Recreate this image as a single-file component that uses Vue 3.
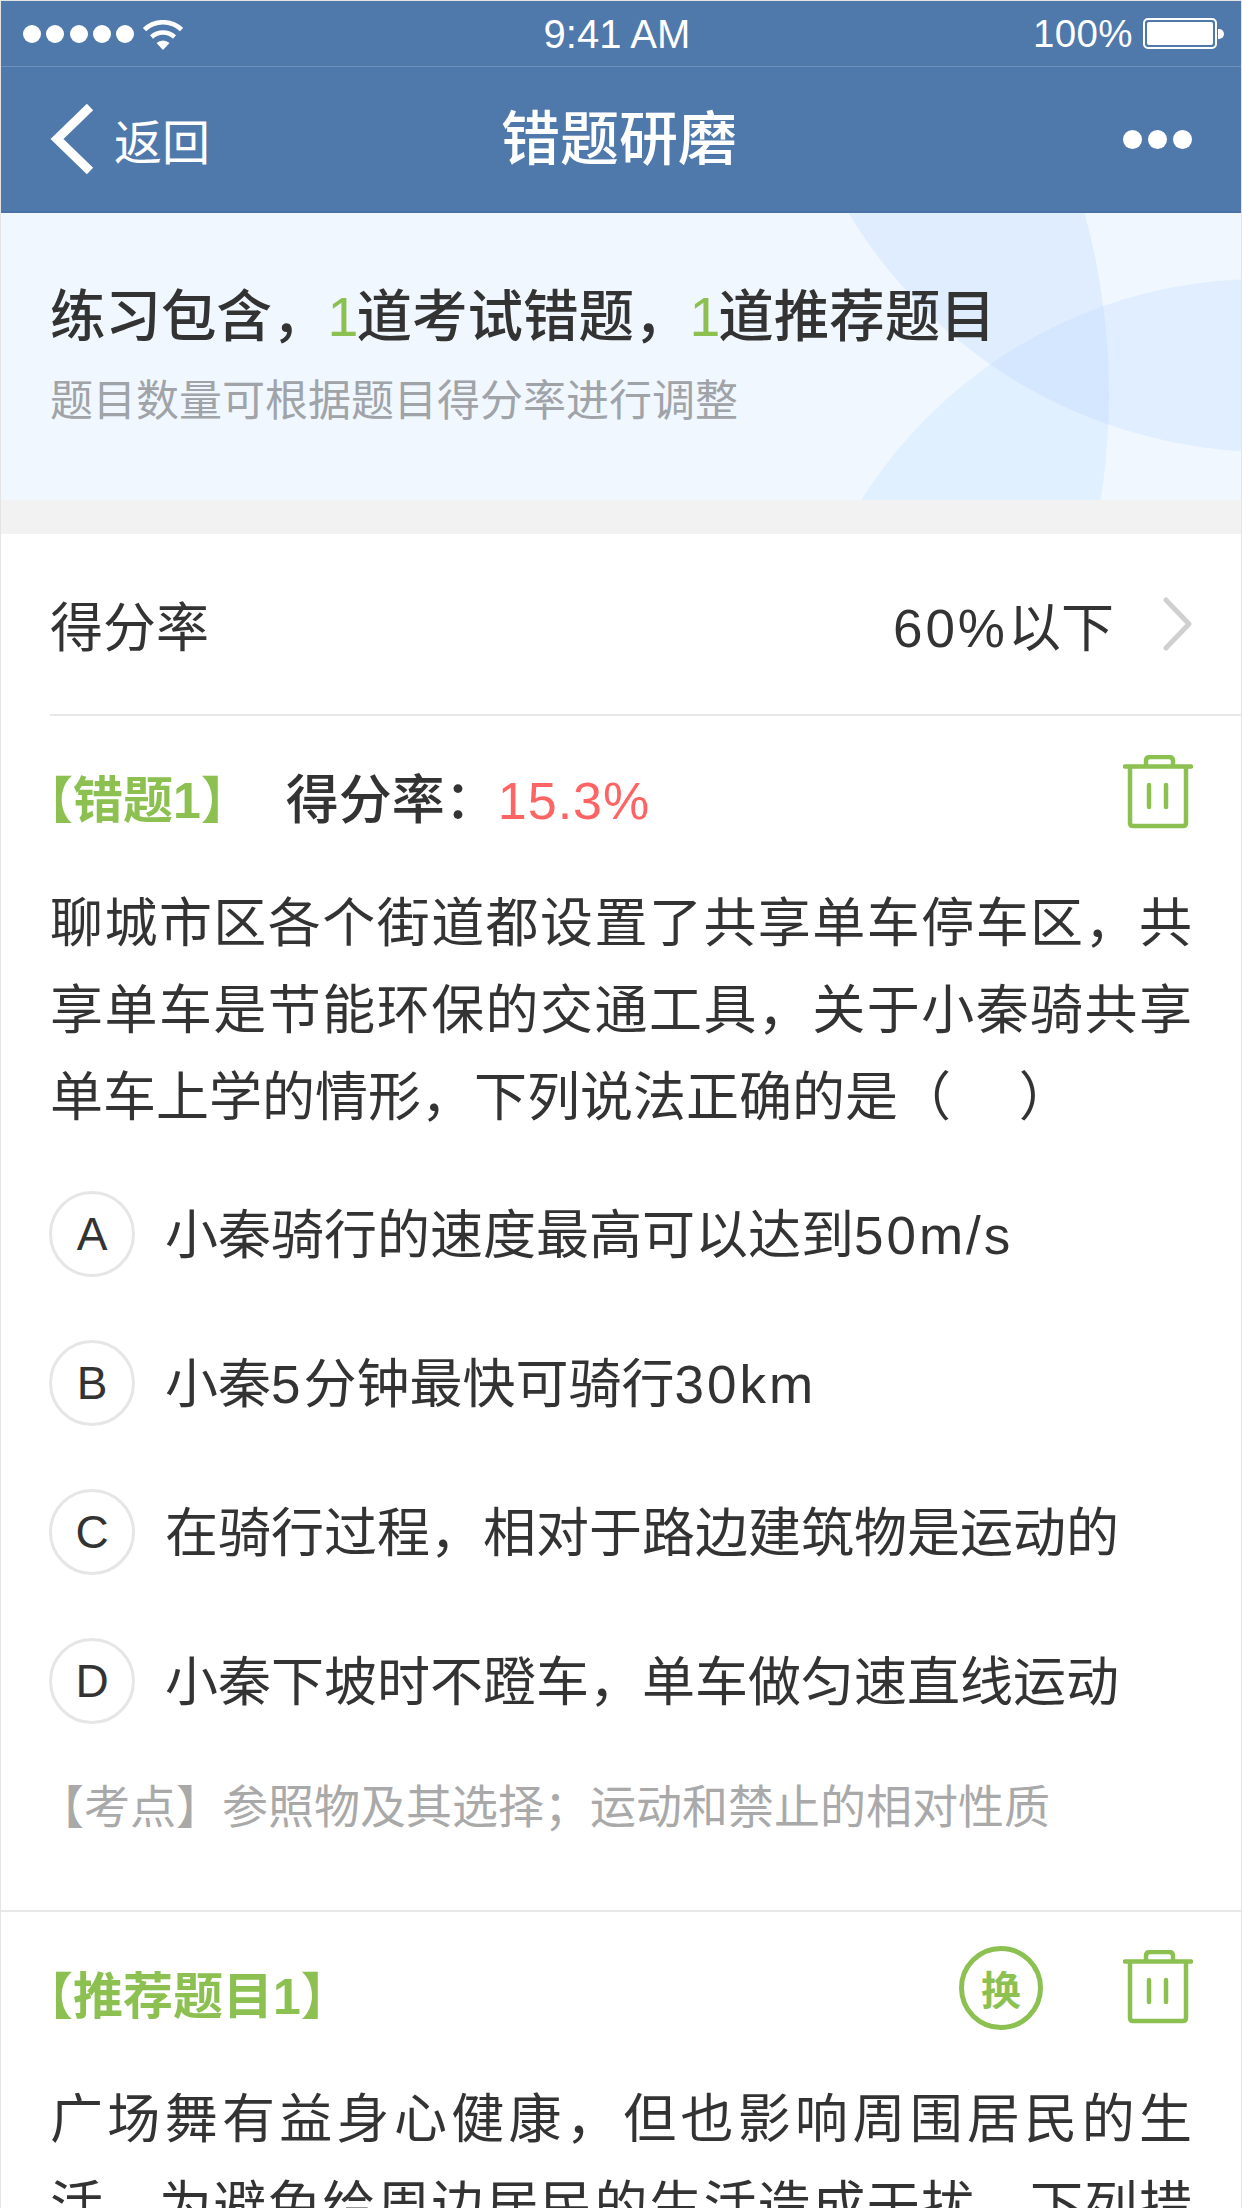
<script setup>
const split = (s) => s.split(/([0-9a-zA-Z/%]+)/).filter(Boolean).map((t) => ({ t, latin: /^[0-9a-zA-Z/%]+$/.test(t) }))
const options = [
  { key: 'A', parts: split('小秦骑行的速度最高可以达到50m/s') },
  { key: 'B', parts: split('小秦5分钟最快可骑行30km') },
  { key: 'C', parts: split('在骑行过程\uFF0C相对于路边建筑物是运动的') },
  { key: 'D', parts: split('小秦下坡时不蹬车\uFF0C单车做匀速直线运动') }
]
const dots = [1, 2, 3, 4, 5]
</script>

<template>
  <div class="page">
    <header class="top">
      <div class="status">
        <div class="signal">
          <i v-for="d in dots" :key="d" class="dot"></i>
          <svg class="wifi" width="40" height="32" viewBox="0 0 40 32">
            <path d="M1.500 9.500 A27 27 0 0 1 38.500 9.500" fill="none" stroke="#fff" stroke-width="4.500" />
            <path d="M8.500 17 A17 17 0 0 1 31.500 17" fill="none" stroke="#fff" stroke-width="4.500" />
            <path d="M13.500 23 A9.500 9.500 0 0 1 26.500 23 L20 30 Z" fill="#fff" />
          </svg>
        </div>
        <div class="time">9:41 AM</div>
        <div class="power">
          <span>100%</span>
          <div class="battery"><i></i></div>
          <div class="nub"></div>
        </div>
      </div>
      <nav class="nav">
        <div class="back">
          <svg width="46" height="72" viewBox="0 0 46 72">
            <path d="M41 4 L8 36 L41 68" fill="none" stroke="#fff" stroke-width="9" />
          </svg>
          <span>返回</span>
        </div>
        <div class="title">错题研磨</div>
        <div class="more"><i></i><i></i><i></i></div>
      </nav>
    </header>

    <section class="banner">
      <svg class="art" width="1242" height="288" viewBox="0 212 1242 288">
        <defs>
          <clipPath id="ca"><circle cx="1270" cy="-40" r="491" /></clipPath>
          <clipPath id="cc"><circle cx="1261" cy="750" r="472" /></clipPath>
        </defs>
        <g clip-path="url(#ca)"><circle cx="427" cy="393" r="682" fill="#dfedfe" /></g>
        <g clip-path="url(#cc)"><circle cx="427" cy="393" r="682" fill="#e1f0ff" /></g>
        <g clip-path="url(#ca)"><circle cx="1261" cy="750" r="472" fill="#e0eeff" /></g>
        <g clip-path="url(#ca)"><g clip-path="url(#cc)"><circle cx="427" cy="393" r="682" fill="#d4e7ff" /></g></g>
      </svg>
      <h1 class="summary">练习包含&#65292;<b>1</b>道考试错题&#65292;<b>1</b>道推荐题目</h1>
      <p class="hint">题目数量可根据题目得分率进行调整</p>
    </section>

    <div class="gap"></div>

    <div class="rate">
      <span>得分率</span>
      <div class="rate-value">
        <span><span class="latin">60%</span>以下</span>
        <svg width="30" height="54" viewBox="0 0 30 54">
          <path d="M3 3 L26 27 L3 51" fill="none" stroke="#d0d0d0" stroke-width="5" stroke-linecap="round" stroke-linejoin="round" />
        </svg>
      </div>
    </div>

    <section class="card">
      <div class="card-head">
        <span class="tag">【错题1】</span>
        <span class="score">得分率&#65306;<em>15.3%</em></span>
        <svg class="trash" width="70" height="74" viewBox="0 0 70 74">
          <path d="M2 11.500 H68 M23 9 V6 Q23 2 27 2 H46 Q50 2 50 6 V9 M7 12 V68 Q7 71 10 71 H60 Q63 71 63 68 V12 M26 30 V52 M43 30 V52" fill="none" stroke="#8cc152" stroke-width="4.500" stroke-linecap="round" />
        </svg>
      </div>
      <p class="question">聊城市区各个街道都设置了共享单车停车区&#65292;共享单车是节能环保的交通工具&#65292;关于小秦骑共享单车上学的情形&#65292;下列说法正确的是&#65288;&#12288;&nbsp;&#65289;</p>
      <ul class="options">
        <li v-for="o in options" :key="o.key">
          <span class="letter">{{ o.key }}</span>
          <span class="option-text"><template v-for="(p, i) in o.parts" :key="i"><span v-if="p.latin" class="latin">{{ p.t }}</span><template v-else>{{ p.t }}</template></template></span>
        </li>
      </ul>
      <p class="point">【考点】参照物及其选择&#65307;运动和禁止的相对性质</p>
    </section>

    <section class="card second">
      <div class="card-head">
        <span class="tag">【推荐题目1】</span>
        <span class="swap">换</span>
        <svg class="trash" width="70" height="74" viewBox="0 0 70 74">
          <path d="M2 11.500 H68 M23 9 V6 Q23 2 27 2 H46 Q50 2 50 6 V9 M7 12 V68 Q7 71 10 71 H60 Q63 71 63 68 V12 M26 30 V52 M43 30 V52" fill="none" stroke="#8cc152" stroke-width="4.500" stroke-linecap="round" />
        </svg>
      </div>
      <p class="question">广场舞有益身心健康&#65292;但也影响周围居民的生活&#65292;为避免给周边居民的生活造成干扰&#65292;下列措施合理的是&#65288;&#12288;&nbsp;&#65289;</p>
    </section>
  </div>
</template>

<style>
html, body { margin: 0; background: #fff; }
</style>

<style scoped>
.page {
  width: 1242px;
  height: 2208px;
  overflow: hidden;
  box-sizing: border-box;
  border: 1px solid #e4e4e4;
  border-bottom: 0;
  background: #fff;
  color: #333;
  font-family: "Liberation Sans", "Noto Sans CJK SC", sans-serif;
}
.top { background: #4f78ab; border-bottom: 2px solid #4a72a6; }
.status {
  height: 65px;
  border-bottom: 1px solid #6e90ba;
  display: grid;
  grid-template-columns: 1fr auto 1fr;
  align-items: center;
  color: #fff;
  font-size: 38.500px;
  padding: 0 17px 0 22px;
}
.signal { display: flex; align-items: center; }
.dot {
  width: 18px;
  height: 18px;
  border-radius: 50%;
  background: #fff;
  margin-right: 5.300px;
}
.wifi { margin-left: 4px; margin-top: 5px; }
.time { font-size: 40px; line-height: 1; margin-left: -13px; }
.power { display: flex; align-items: center; justify-content: flex-end; }
.power span { margin-right: 10px; letter-spacing: 0.400px; }
.battery {
  width: 74px;
  height: 31px;
  box-sizing: border-box;
  border: 2px solid #fff;
  border-radius: 5px;
  padding: 2px;
}
.battery i { display: block; height: 100%; background: #fff; border-radius: 2px; }
.nub {
  width: 6px;
  height: 10px;
  margin-left: 1px;
  background: #fff;
  border-radius: 0 5px 5px 0;
}
.nav {
  height: 144px;
  display: grid;
  grid-template-columns: 1fr auto 1fr;
  align-items: center;
  padding: 0 49px 0 48px;
  color: #fff;
}
.back { display: flex; align-items: center; font-size: 48px; }
.back span { margin-left: 19px; }
.title { font-size: 59px; font-weight: 500; line-height: 1; margin-top: 3px; margin-left: -3px; }
.more { display: flex; justify-content: flex-end; gap: 6px; }
.more i { width: 19px; height: 19px; border-radius: 50%; background: #fff; }

.banner {
  position: relative;
  height: 287px;
  box-sizing: border-box;
  padding: 66px 0 0 49px;
  background: #f0f7ff;
  overflow: hidden;
}
.art { position: absolute; left: -1px; top: 0; }
.summary {
  position: relative;
  margin: 0;
  font-size: 55.500px;
  font-weight: 500;
  line-height: 76px;
  color: #333;
}
.summary b { color: #8cc152; font-weight: 500; letter-spacing: -2px; }
.hint {
  position: relative;
  margin: 16px 0 0;
  font-size: 43px;
  line-height: 60px;
  color: #a0a3a8;
}
.gap { height: 34px; background: #f2f2f2; }

.rate {
  height: 180px;
  margin-left: 49px;
  padding-right: 48px;
  border-bottom: 2px solid #e8e8e8;
  display: flex;
  align-items: center;
  justify-content: space-between;
  font-size: 53px;
  color: #333;
}
.rate-value { display: flex; align-items: center; gap: 49px; }
.latin { letter-spacing: 3px; }

.card { padding: 0 48px 0 49px; }
.card-head {
  height: 164px;
  display: flex;
  align-items: center;
  font-size: 53px;
  font-weight: 500;
}
.tag { color: #8cc152; margin-left: -27px; font-size: 50px; font-weight: 700; margin-top: -4px; }
.score { margin-left: 35px; color: #333; margin-top: -4px; }
.score em { font-style: normal; font-weight: 400; font-size: 52px; letter-spacing: 1px; color: #ff6464; }
.trash { margin-left: auto; margin-top: -12px; }
.swap {
  margin-left: auto;
  width: 84px;
  height: 84px;
  box-sizing: border-box;
  border: 5px solid #8cc152;
  border-radius: 50%;
  color: #8cc152;
  font-size: 40px;
  font-weight: 700;
  display: flex;
  align-items: center;
  justify-content: center;
  margin-top: -13px;
}
.swap + .trash { margin-left: 80px; margin-top: -14px; }
.question {
  margin: 0 1px 0 0;
  font-size: 53px;
  line-height: 87px;
  text-align: justify;
  color: #333;
}
.options { list-style: none; margin: 50px 0 0 -1px; padding: 0; display: flex; flex-direction: column; gap: 63px; }
.options li { display: flex; align-items: center; height: 86px; font-size: 53px; gap: 30px; color: #333; }
.option-text { margin-top: -6px; }
.letter {
  width: 86px;
  height: 86px;
  box-sizing: border-box;
  border: 3px solid #e6e6e6;
  border-radius: 50%;
  display: flex;
  align-items: center;
  justify-content: center;
  font-size: 46px;
}
.point {
  margin: 53px 0 0 -12px;
  padding-bottom: 73px;
  font-size: 46px;
  line-height: 60px;
  color: #a9a9a9;
}
.second { border-top: 2px solid #e8e8e8; }
</style>
